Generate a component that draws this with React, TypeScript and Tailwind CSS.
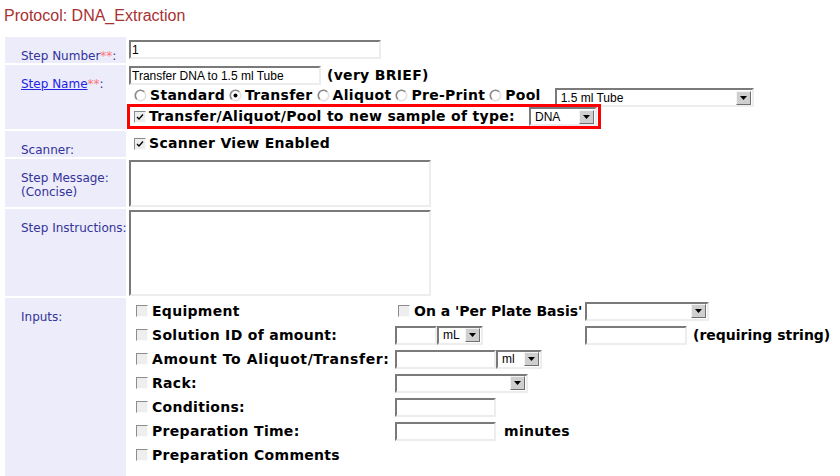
import React from "react";

const boldText = "font-['DejaVu_Sans',sans-serif] font-bold text-[14px] tracking-[0.3px] text-black leading-[17px] whitespace-nowrap";
const fieldFont = "font-['Liberation_Sans',Arial,sans-serif] text-[12px] text-black";
const sunken = "border-2 border-t-[#7a7a7a] border-l-[#7a7a7a] border-b-[#ededed] border-r-[#ededed] bg-white";

const Checkbox = ({ checked = false }: { checked?: boolean }) => (
    <span className="inline-flex items-center justify-center w-[12px] h-[12px] shrink-0 bg-[#eeeeee] border border-t-[#8c8c8c] border-l-[#8c8c8c] border-b-[#fafafa] border-r-[#fafafa]">
        {checked && (
            <svg width="8" height="8" viewBox="0 0 8 8">
                <path d="M1 4 L3 6 L7 1.5" fill="none" stroke="#000" strokeWidth="1.3" />
            </svg>
        )}
    </span>
);

const Radio = ({ checked = false }: { checked?: boolean }) => (
    <svg width="13" height="13" viewBox="0 0 13 13" className="shrink-0">
        <circle cx="6.5" cy="6.5" r="5.2" fill="#fff" stroke="#e2e2e2" strokeWidth="1.6" />
        <path d="M2.8 10.2 A5.2 5.2 0 0 1 10.2 2.8" fill="none" stroke="#8a8a8a" strokeWidth="1.6" />
        {checked && <circle cx="6.5" cy="6.5" r="2" fill="#000" />}
    </svg>
);

const TextInput = ({ w, value = "", h = "h-[19px]" }: { w: string; value?: string; h?: string }) => (
    <div className={`${sunken} ${w} ${h} ${fieldFont} shrink-0 flex items-center px-[1px] leading-none overflow-hidden whitespace-nowrap`}>
        {value}
    </div>
);

const Select = ({ w, value = "" }: { w: string; value?: string }) => (
    <div className={`${sunken} ${w} h-[19px] ${fieldFont} shrink-0 flex items-center justify-between pl-[4px] pr-[1px] leading-none`}>
        <span className="whitespace-nowrap">{value}</span>
        <span className="w-[15px] h-[14px] bg-[#cfcfcf] border border-t-[#f4f4f4] border-l-[#f4f4f4] border-b-[#6f6f6f] border-r-[#6f6f6f] flex items-center justify-center">
            <svg width="7" height="4" viewBox="0 0 7 4">
                <path d="M0 0 H7 L3.5 4 Z" fill="#000" />
            </svg>
        </span>
    </div>
);

const Label = ({ children, h }: { children: React.ReactNode; h: string }) => (
    <div className={`w-[121px] ${h} shrink-0 bg-[#ececfb] pl-[16px] pt-[12px] font-['DejaVu_Sans',sans-serif] text-[12px] leading-[14px] text-[#333399] whitespace-nowrap`}>
        {children}
    </div>
);

const Req = () => <span className="text-[#ff7777]">**</span>;

const App = () => {
    const radios = [
        { label: "Standard", checked: false },
        { label: "Transfer", checked: true },
        { label: "Aliquot", checked: false },
        { label: "Pre-Print", checked: false },
        { label: "Pool", checked: false },
    ];

    const inputRow = "h-[24px] flex items-center";

    return (
        <div className="w-[840px] h-[476px] overflow-hidden bg-white">
            <div className="pl-[4px] pt-[4px] h-[37px] font-['Liberation_Sans',Arial,sans-serif] text-[16px] text-[#a83232]">
                Protocol: DNA_Extraction
            </div>

            <div className="ml-[5px] flex flex-col gap-[2px]">
                {/* Step Number */}
                <div className="flex h-[26px]">
                    <Label h="h-[26px]">
                        Step Number<Req />:
                    </Label>
                    <div className="ml-[2px] pl-[1px] pt-[3px]">
                        <TextInput w="w-[252px]" value="1" />
                    </div>
                </div>

                {/* Step Name */}
                <div className="flex h-[64px]">
                    <Label h="h-[64px]">
                        <span className="text-[#2323e6] underline">Step Name</span>
                        <Req />:
                    </Label>
                    <div className="ml-[2px] pl-[1px] pt-[1px] flex flex-col">
                        <div className="flex items-center">
                            <TextInput w="w-[192px]" value="Transfer DNA to 1.5 ml Tube" />
                            <span className={`${boldText} ml-[6px]`}>(very BRIEF)</span>
                        </div>
                        <div className="flex items-start h-[17px] mt-[2px] pl-[5px]">
                            {radios.map((r) => (
                                <span key={r.label} className="flex items-center h-[17px] mr-[4px]">
                                    <Radio checked={r.checked} />
                                    <span className={`${boldText} ml-[3px]`}>{r.label}</span>
                                </span>
                            ))}
                            <div className="ml-[10px] mt-[1px] relative z-10">
                                <Select w="w-[199px]" value="1.5 ml Tube" />
                            </div>
                        </div>
                        <div className="relative z-10 -ml-[2px] w-[474px] h-[30px] border-[3px] border-[#ff0000] flex items-center pl-[4px] bg-white">
                            <Checkbox checked />
                            <span className={`${boldText} ml-[3px]`}>Transfer/Aliquot/Pool to new sample of type:</span>
                            <div className="ml-auto mr-[1px]">
                                <Select w="w-[68px]" value="DNA" />
                            </div>
                        </div>
                    </div>
                </div>

                {/* Scanner */}
                <div className="flex h-[26px]">
                    <Label h="h-[26px]">Scanner:</Label>
                    <div className="ml-[2px] pl-[6px] pt-[4px] flex items-center h-[21px]">
                        <Checkbox checked />
                        <span className={`${boldText} ml-[3px]`}>Scanner View Enabled</span>
                    </div>
                </div>

                {/* Step Message */}
                <div className="flex h-[48px]">
                    <Label h="h-[48px]">
                        Step Message:
                        <br />
                        (Concise)
                    </Label>
                    <div className="ml-[2px] pl-[1px] pt-[1px]">
                        <TextInput w="w-[302px]" h="h-[47px]" />
                    </div>
                </div>

                {/* Step Instructions */}
                <div className="flex h-[87px]">
                    <Label h="h-[87px]">Step Instructions:</Label>
                    <div className="ml-[2px] pl-[1px] pt-[1px]">
                        <TextInput w="w-[302px]" h="h-[86px]" />
                    </div>
                </div>

                {/* Inputs */}
                <div className="flex h-[180px]">
                    <Label h="h-[180px]">Inputs:</Label>
                    <div className="ml-[2px] pl-[8px] pt-[1px] grid grid-cols-[259px_190px_auto] auto-rows-[24px]">
                        <div className={inputRow}>
                            <Checkbox />
                            <span className={`${boldText} ml-[4px]`}>Equipment</span>
                        </div>
                        <div className={`${inputRow} pl-[3px]`}>
                            <Checkbox />
                            <span className={`${boldText} ml-[4px] text-[13px] tracking-normal`}>On a 'Per Plate Basis'</span>
                        </div>
                        <div className={inputRow}>
                            <Select w="w-[124px]" />
                        </div>

                        <div className={inputRow}>
                            <Checkbox />
                            <span className={`${boldText} ml-[4px]`}>Solution ID of amount:</span>
                        </div>
                        <div className={inputRow}>
                            <TextInput w="w-[42px]" />
                            <Select w="w-[46px]" value="mL" />
                        </div>
                        <div className={inputRow}>
                            <TextInput w="w-[102px]" />
                            <span className={`${boldText} ml-[6px] tracking-normal`}>(requiring string)</span>
                        </div>

                        <div className={inputRow}>
                            <Checkbox />
                            <span className={`${boldText} ml-[4px] tracking-[0.6px]`}>Amount To Aliquot/Transfer:</span>
                        </div>
                        <div className={`${inputRow} col-span-2`}>
                            <TextInput w="w-[101px]" />
                            <Select w="w-[46px]" value="ml" />
                        </div>

                        <div className={inputRow}>
                            <Checkbox />
                            <span className={`${boldText} ml-[4px]`}>Rack:</span>
                        </div>
                        <div className={`${inputRow} col-span-2`}>
                            <Select w="w-[133px]" />
                        </div>

                        <div className={inputRow}>
                            <Checkbox />
                            <span className={`${boldText} ml-[4px]`}>Conditions:</span>
                        </div>
                        <div className={`${inputRow} col-span-2`}>
                            <TextInput w="w-[101px]" />
                        </div>

                        <div className={inputRow}>
                            <Checkbox />
                            <span className={`${boldText} ml-[4px]`}>Preparation Time:</span>
                        </div>
                        <div className={`${inputRow} col-span-2`}>
                            <TextInput w="w-[101px]" />
                            <span className={`${boldText} ml-[8px]`}>minutes</span>
                        </div>

                        <div className={`${inputRow} col-span-3`}>
                            <Checkbox />
                            <span className={`${boldText} ml-[4px]`}>Preparation Comments</span>
                        </div>
                    </div>
                </div>
            </div>
        </div>
    );
};

export default App;
